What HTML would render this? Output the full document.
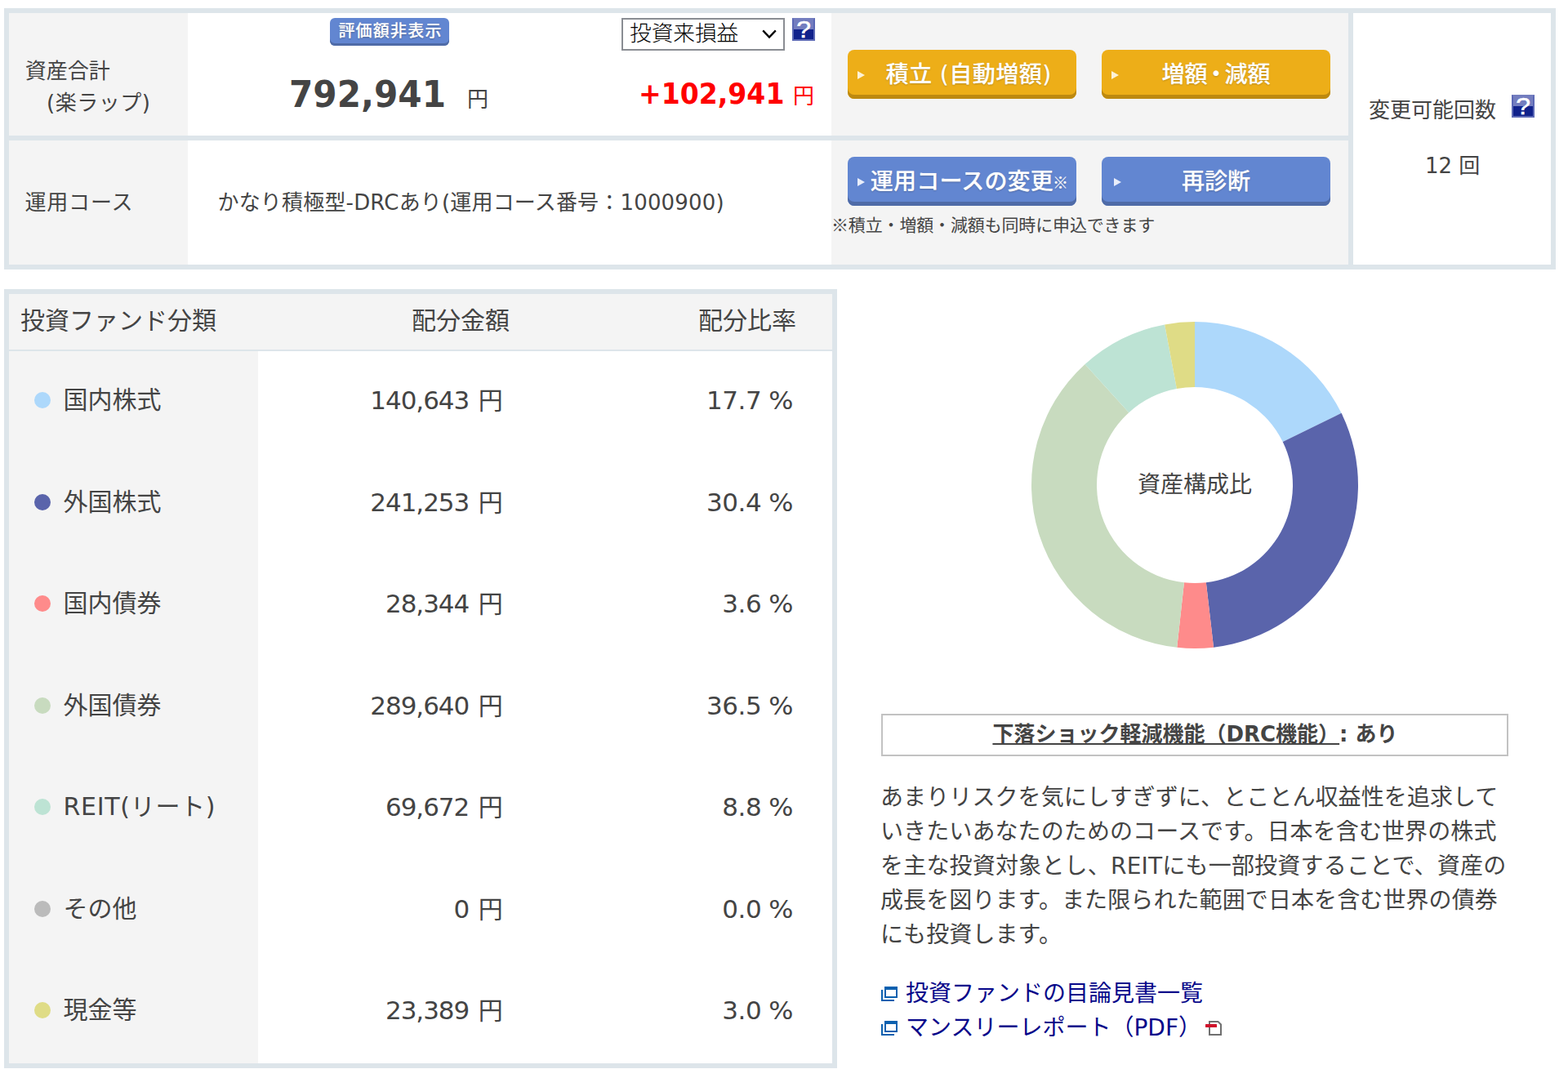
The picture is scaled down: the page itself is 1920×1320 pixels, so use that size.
<!DOCTYPE html>
<html lang="ja">
<head>
<meta charset="utf-8">
<title>楽ラップ 資産状況</title>
<style>
html,body{margin:0;padding:0;background:#fff;}
body{width:1920px;height:1320px;position:relative;overflow:hidden;color:#444;
 font-family:"DejaVu Sans","Liberation Sans","Noto Sans CJK JP",sans-serif;font-size:26px;}
.abs{position:absolute;}
.box{position:absolute;box-sizing:border-box;}
.t{position:absolute;white-space:nowrap;line-height:1;}
.bd{background:#dde5ea;}
.g{background:#f4f4f4;}
.w{background:#fff;}
.btn{position:absolute;box-sizing:border-box;width:280px;height:60px;border-radius:8px;color:#fff;font-weight:500;font-size:28px;text-align:center;line-height:62px;white-space:nowrap;text-shadow:0 1px 2px rgba(0,0,0,.22),0 0 1px rgba(255,255,255,.6);}
.btn.or{background:#edae18;box-shadow:inset 0 -5px 0 #bd8910;}
.btn.bl{background:#6286d1;box-shadow:inset 0 -5px 0 #4f6ba7;}
.btn i{position:absolute;left:12px;top:25.5px;width:0;height:0;border-left:9px solid #fdf2d6;border-top:5.5px solid transparent;border-bottom:5.5px solid transparent;}
.btn.bl i{border-left-color:#e9eefa;}
.help{position:absolute;width:28px;height:28px;box-sizing:border-box;border:2px solid #5b68b5;border-top-color:#737dbf;background:linear-gradient(#737dbf 0,#737dbf 50%,#10218b 50%,#10218b 100%);color:#fff;font-weight:normal;font-size:29px;line-height:25px;-webkit-text-stroke:.5px #fff;text-align:center;font-family:"Liberation Sans",sans-serif;}
.help span{display:inline-block;transform:scaleX(1.1);}
.dot{position:absolute;width:20px;height:20px;border-radius:50%;left:42px;}
.lab{left:77.5px;font-size:30px;}
.amt,.pct{font-size:30px;text-align:right;}
.amt{right:1304.3px;word-spacing:2px;}
.d{font-size:31px;letter-spacing:-1.05px;}
.pct{right:948px;word-spacing:1.8px;}
.pct .d{letter-spacing:-.5px;}
.p{left:1078px;font-size:28px;letter-spacing:.1px;}
.lnk{left:1109px;font-size:28px;color:#07078a;}
.n{font-family:"Noto Sans CJK JP",sans-serif;}
.pct b{display:inline-block;font-weight:normal;transform:scaleX(1.06);transform-origin:100% 50%;}
.sx{display:inline-block;transform-origin:0 50%;}
</style>
</head>
<body>
<!-- TOP TABLE -->
<div class="box bd" style="left:5px;top:10px;width:1900px;height:320px;"></div>
<div class="box g" style="left:11px;top:16px;width:219px;height:150px;"></div>
<div class="box w" style="left:230px;top:16px;width:788px;height:150px;"></div>
<div class="box g" style="left:1018px;top:16px;width:633px;height:150px;"></div>
<div class="box g" style="left:11px;top:172px;width:219px;height:152px;"></div>
<div class="box w" style="left:230px;top:172px;width:788px;height:152px;"></div>
<div class="box g" style="left:1018px;top:172px;width:633px;height:152px;"></div>
<div class="box w" style="left:1657px;top:16px;width:242px;height:308px;"></div>

<div class="t" style="left:30.7px;top:74px;">資産合計</div>
<div class="t" style="left:57px;top:113px;letter-spacing:.5px;">(楽ラップ)</div>
<div class="t" style="left:30.5px;top:234.5px;letter-spacing:.8px;">運用コース</div>

<div class="box" style="left:404px;top:22px;width:146px;height:34px;border-radius:6px;background:#6286d1;box-shadow:inset 0 -3px 0 #4f6ba7;color:#fff;font-weight:500;font-size:20px;line-height:33.5px;text-align:center;text-shadow:0 1px 2px rgba(0,0,0,.3),0 0 1px rgba(255,255,255,.6);white-space:nowrap;letter-spacing:1.2px;padding-left:2px;">評価額非表示</div>
<div class="t" style="left:354px;top:93.5px;font-size:44px;font-weight:bold;"><span class="sx" style="transform:scaleX(.958);">792,941</span></div>
<div class="t" style="left:572px;top:109px;">円</div>

<div class="box" style="left:761px;top:22px;width:200px;height:40px;border:2px solid #8a8d93;background:#fff;color:#000;font-weight:300;font-size:26.67px;line-height:33.5px;padding-left:8px;white-space:nowrap;">投資来損益
<svg class="abs" style="right:8px;top:12px;" width="18" height="12" viewBox="0 0 18 12"><path d="M1.2 1.4 L9 9.6 L16.8 1.4" fill="none" stroke="#000" stroke-width="2.3"/></svg></div>
<div class="help" style="left:970px;top:22px;"><span>?</span></div>
<div class="t" style="left:782px;top:97px;font-size:36px;font-weight:bold;color:#f00;"><span class="sx" style="transform:scaleX(.919);">+102,941</span></div>
<div class="t" style="left:971px;top:105px;color:#f00;">円</div>

<div class="t" style="left:266.5px;top:234.5px;letter-spacing:.18px;">かなり積極型-DRCあり(運用コース番号：1000900)</div>

<div class="btn or" style="left:1038px;top:61px;padding-left:16px;letter-spacing:.5px;"><i></i>積立 (自動増額)</div>
<div class="btn or" style="left:1349px;top:61px;"><i></i>増額<span style="margin:0 -3.5px;">・</span>減額</div>
<div class="btn bl" style="left:1038px;top:192px;padding-left:18px;letter-spacing:.2px;"><i></i>運用コースの変更<span class="n" style="font-size:19px;font-weight:bold;margin-left:-1px;position:relative;top:-1px;">※</span></div>
<div class="btn bl" style="left:1349px;top:192px;"><i style="left:15px;"></i>再診断</div>
<div class="t n" style="left:1018px;top:264px;font-size:21px;letter-spacing:-.15px;">※積立・増額・減額も同時に申込できます</div>

<div class="t" style="left:1676px;top:122px;">変更可能回数</div>
<div class="help" style="left:1851px;top:116px;"><span>?</span></div>
<div class="t" style="left:1745px;top:190px;">12 回</div>

<!-- LOWER LEFT TABLE -->
<div class="box bd" style="left:5px;top:354px;width:1020px;height:954px;"></div>
<div class="box g" style="left:11px;top:360px;width:1008px;height:68px;"></div>
<div class="box g" style="left:11px;top:430px;width:305px;height:872px;"></div>
<div class="box w" style="left:316px;top:430px;width:703px;height:872px;"></div>

<div class="t" style="left:25px;top:378px;font-size:30px;">投資ファンド分類</div>
<div class="t" style="left:504px;top:378px;font-size:30px;">配分金額</div>
<div class="t" style="left:855px;top:378px;font-size:30px;">配分比率</div>

<div class="dot" style="top:480px;background:#add8fb;"></div><div class="t lab" style="top:475px;">国内株式</div><div class="t amt" style="top:475px;"><span class="d">140,643</span> 円</div><div class="t pct" style="top:475px;"><span class="d">17.7</span> <b>%</b></div>
<div class="dot" style="top:605px;background:#5a64ab;"></div><div class="t lab" style="top:600px;">外国株式</div><div class="t amt" style="top:600px;"><span class="d">241,253</span> 円</div><div class="t pct" style="top:600px;"><span class="d">30.4</span> <b>%</b></div>
<div class="dot" style="top:729px;background:#fe8b8b;"></div><div class="t lab" style="top:724px;">国内債券</div><div class="t amt" style="top:724px;"><span class="d">28,344</span> 円</div><div class="t pct" style="top:724px;"><span class="d">3.6</span> <b>%</b></div>
<div class="dot" style="top:854px;background:#c8dbbf;"></div><div class="t lab" style="top:849px;">外国債券</div><div class="t amt" style="top:849px;"><span class="d">289,640</span> 円</div><div class="t pct" style="top:849px;"><span class="d">36.5</span> <b>%</b></div>
<div class="dot" style="top:978px;background:#bde3d4;"></div><div class="t lab" style="top:973px;letter-spacing:.7px;">REIT(リート)</div><div class="t amt" style="top:973px;"><span class="d">69,672</span> 円</div><div class="t pct" style="top:973px;"><span class="d">8.8</span> <b>%</b></div>
<div class="dot" style="top:1103px;background:#bbbbbb;"></div><div class="t lab" style="top:1098px;">その他</div><div class="t amt" style="top:1098px;"><span class="d">0</span> 円</div><div class="t pct" style="top:1098px;"><span class="d">0.0</span> <b>%</b></div>
<div class="dot" style="top:1227px;background:#dfdc86;"></div><div class="t lab" style="top:1222px;">現金等</div><div class="t amt" style="top:1222px;"><span class="d">23,389</span> 円</div><div class="t pct" style="top:1222px;"><span class="d">3.0</span> <b>%</b></div>

<!-- DONUT -->
<svg class="abs" style="left:1243px;top:374px;" width="440" height="440" viewBox="-220 -220 440 440">
<path d="M0.00 -200.00 A200 200 0 0 1 179.53 -88.14 L107.72 -52.88 A120 120 0 0 0 0.00 -120.00 Z" fill="#add8fb"/>
<path d="M179.53 -88.14 A200 200 0 0 1 23.05 198.67 L13.83 119.20 A120 120 0 0 0 107.72 -52.88 Z" fill="#5a64ab"/>
<path d="M23.05 198.67 A200 200 0 0 1 -21.78 198.81 L-13.07 119.29 A120 120 0 0 0 13.83 119.20 Z" fill="#fe8b8b"/>
<path d="M-21.78 198.81 A200 200 0 0 1 -134.47 -148.04 L-80.68 -88.83 A120 120 0 0 0 -13.07 119.29 Z" fill="#c8dbbf"/>
<path d="M-134.47 -148.04 A200 200 0 0 1 -36.85 -196.58 L-22.11 -117.95 A120 120 0 0 0 -80.68 -88.83 Z" fill="#bde3d4"/>
<path d="M-36.85 -196.58 A200 200 0 0 1 -0.00 -200.00 L-0.00 -120.00 A120 120 0 0 0 -22.11 -117.95 Z" fill="#dfdc86"/>
<text x="0" y="9" text-anchor="middle" font-size="28" fill="#444" font-family="'DejaVu Sans','Liberation Sans','Noto Sans CJK JP',sans-serif">資産構成比</text>
</svg>

<!-- DRC BOX -->
<div class="box" style="left:1079px;top:874px;width:768px;height:52px;border:2px solid #c2c2c2;background:#fff;text-align:center;font-weight:bold;font-size:26px;line-height:46px;padding-left:1px;white-space:nowrap;"><span style="text-decoration:underline;text-underline-offset:2px;text-decoration-thickness:1.6px;">下落ショック軽減機能（DRC機能）</span>: あり</div>

<div class="t p" style="top:963px;">あまりリスクを気にしすぎずに、とことん収益性を追求して</div>
<div class="t p" style="top:1005px;">いきたいあなたのためのコースです。日本を含む世界の株式</div>
<div class="t p" style="top:1047px;letter-spacing:.2px;">を主な投資対象とし、REITにも一部投資することで、資産の</div>
<div class="t p" style="top:1089px;">成長を図ります。また限られた範囲で日本を含む世界の債券</div>
<div class="t p" style="top:1131px;">にも投資します。</div>

<svg class="abs" style="left:1079px;top:1208px;" width="20" height="18" viewBox="0 0 20 18"><path d="M1 4 V17 H16" fill="none" stroke="#0b60af" stroke-width="2"/><rect x="5" y="1" width="14" height="12" fill="#fff" stroke="#0b60af" stroke-width="2"/><rect x="4" y="0" width="16" height="4" fill="#0b60af"/></svg>
<div class="t lnk" style="top:1203px;">投資ファンドの目論見書一覧</div>
<svg class="abs" style="left:1079px;top:1250px;" width="20" height="18" viewBox="0 0 20 18"><path d="M1 4 V17 H16" fill="none" stroke="#0b60af" stroke-width="2"/><rect x="5" y="1" width="14" height="12" fill="#fff" stroke="#0b60af" stroke-width="2"/><rect x="4" y="0" width="16" height="4" fill="#0b60af"/></svg>
<div class="t lnk" style="top:1245px;">マンスリーレポート（PDF）</div>
<svg class="abs" style="left:1475px;top:1249px;" width="22" height="20" viewBox="0 0 22 20"><path d="M6 2 H16.5 L20 5.5 V18 H6 Z" fill="#fff" stroke="#6f6f6f" stroke-width="2"/><rect x="1" y="5" width="14" height="4" rx="0.5" fill="#d0112b"/></svg>
</body>
</html>
